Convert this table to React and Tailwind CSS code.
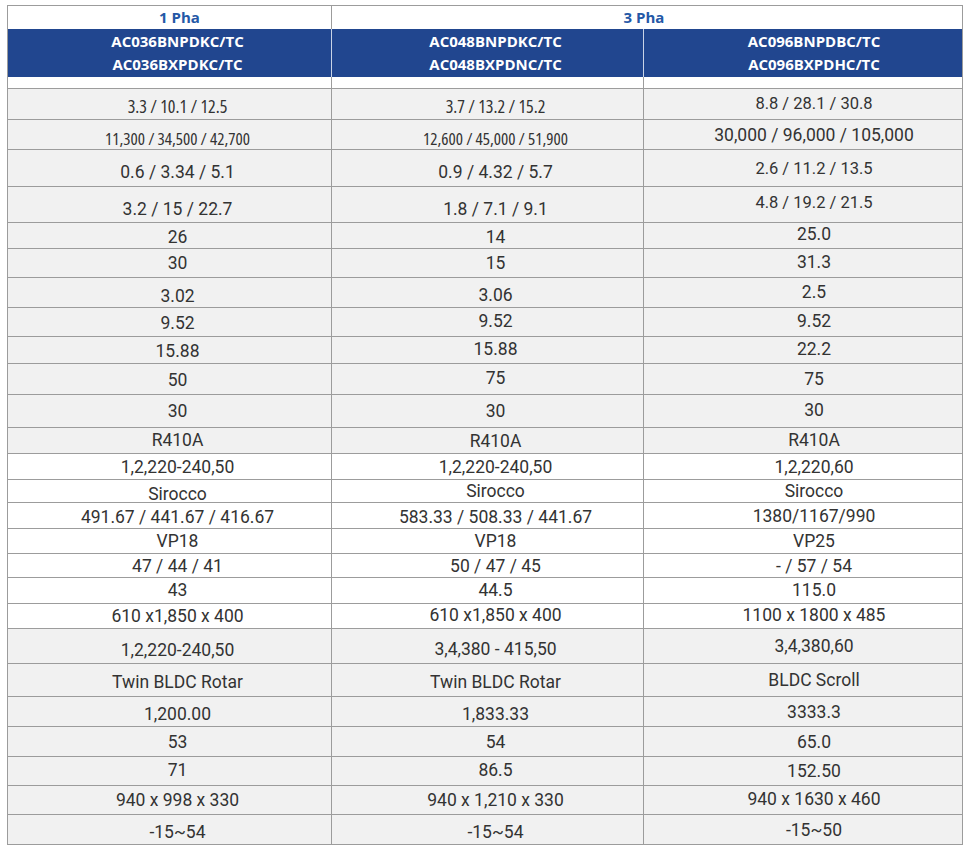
// Spec comparison table: 1 Pha / 3 Pha outdoor units
const GRAY = "bg-[#f1f1f1]";
const WHITE = "bg-white";

// the source table mixes a condensed face in the top rows with a regular one below
const C18 = "font-['Open_Sans',sans-serif] [font-stretch:75%] text-[18px]";
const C17 = "font-['Open_Sans',sans-serif] [font-stretch:75%] text-[17px]";
const R16 = "font-['Roboto',sans-serif] text-[16.5px]";
const BASE = "font-['Roboto',sans-serif] text-[17.5px]";

const rows = [
  { h: "h-[31px]", bg: GRAY, c: ["3.3 / 10.1 / 12.5", "3.7 / 13.2 / 15.2", "8.8 / 28.1 / 30.8"], o: ["translate-y-[2px]", "translate-y-[2px]", ""], s: [C18, C18, R16] },
  { h: "h-[30px]", bg: GRAY, c: ["11,300 / 34,500 / 42,700", "12,600 / 45,000 / 51,900", "30,000 / 96,000 / 105,000"], o: ["translate-y-[4px]", "translate-y-[4px]", "translate-y-[1px]"], s: [C17, C17, BASE] },
  { h: "h-[37px]", bg: GRAY, c: ["0.6 / 3.34 / 5.1", "0.9 / 4.32 / 5.7", "2.6 / 11.2 / 13.5"], o: ["translate-y-[5px]", "translate-y-[5px]", "translate-y-[1px]"], s: [BASE, BASE, R16] },
  { h: "h-[36px]", bg: GRAY, c: ["3.2 / 15 / 22.7", "1.8 / 7.1 / 9.1", "4.8 / 19.2 / 21.5"], o: ["translate-y-[5px]", "translate-y-[5px]", "-translate-y-[1px]"], s: [BASE, BASE, R16] },
  { h: "h-[26px]", bg: GRAY, c: ["26", "14", "25.0"], o: ["translate-y-[2px]", "translate-y-[2px]", "-translate-y-[1px]"] },
  { h: "h-[29px]", bg: GRAY, c: ["30", "15", "31.3"], o: ["translate-y-[1px]", "translate-y-[1px]", ""] },
  { h: "h-[30px]", bg: GRAY, c: ["3.02", "3.06", "2.5"], o: ["translate-y-[4px]", "translate-y-[3px]", ""] },
  { h: "h-[29px]", bg: GRAY, c: ["9.52", "9.52", "9.52"], o: ["translate-y-[2px]", "", ""] },
  { h: "h-[27px]", bg: GRAY, c: ["15.88", "15.88", "22.2"], o: ["translate-y-[2px]", "", ""] },
  { h: "h-[31px]", bg: GRAY, c: ["50", "75", "75"], o: ["translate-y-[2px]", "", "translate-y-[1px]"] },
  { h: "h-[33px]", bg: GRAY, c: ["30", "30", "30"], o: ["translate-y-[1px]", "translate-y-[1px]", ""] },
  { h: "h-[26px]", bg: GRAY, c: ["R410A", "R410A", "R410A"], o: ["", "translate-y-[1px]", ""] },
  { h: "h-[26px]", bg: WHITE, c: ["1,2,220-240,50", "1,2,220-240,50", "1,2,220,60"], o: ["translate-y-[1px]", "translate-y-[1px]", "translate-y-[1px]"] },
  { h: "h-[23px]", bg: WHITE, c: ["Sirocco", "Sirocco", "Sirocco"], o: ["translate-y-[4px]", "translate-y-[1px]", "translate-y-[1px]"] },
  { h: "h-[26px]", bg: WHITE, c: ["491.67 / 441.67 / 416.67", "583.33 / 508.33 / 441.67", "1380/1167/990"], o: ["translate-y-[2px]", "translate-y-[2px]", "translate-y-[1px]"] },
  { h: "h-[25px]", bg: WHITE, c: ["VP18", "VP18", "VP25"], o: ["translate-y-[1px]", "translate-y-[1px]", "translate-y-[1px]"] },
  { h: "h-[24px]", bg: WHITE, c: ["47 / 44 / 41", "50 / 47 / 45", "- / 57 / 54"], o: ["translate-y-[1px]", "translate-y-[1px]", "translate-y-[1px]"] },
  { h: "h-[26px]", bg: WHITE, c: ["43", "44.5", "115.0"], o: ["", "", ""] },
  { h: "h-[25px]", bg: WHITE, c: ["610 x1,850 x 400", "610 x1,850 x 400", "1100 x 1800 x 485"], o: ["translate-y-[1px]", "", ""] },
  { h: "h-[35px]", bg: GRAY, c: ["1,2,220-240,50", "3,4,380 - 415,50", "3,4,380,60"], o: ["translate-y-[5px]", "translate-y-[4px]", "translate-y-[1px]"] },
  { h: "h-[33px]", bg: GRAY, c: ["Twin BLDC Rotar", "Twin BLDC Rotar", "BLDC Scroll"], o: ["translate-y-[3px]", "translate-y-[3px]", "translate-y-[1px]"] },
  { h: "h-[30px]", bg: GRAY, c: ["1,200.00", "1,833.33", "3333.3"], o: ["translate-y-[3px]", "translate-y-[3px]", "translate-y-[1px]"] },
  { h: "h-[30px]", bg: GRAY, c: ["53", "54", "65.0"], o: ["translate-y-[1px]", "translate-y-[1px]", "translate-y-[1px]"] },
  { h: "h-[29px]", bg: GRAY, c: ["71", "86.5", "152.50"], o: ["", "", "translate-y-[1px]"] },
  { h: "h-[29px]", bg: GRAY, c: ["940 x 998 x 330", "940 x 1,210 x 330", "940 x 1630 x 460"], o: ["translate-y-[1px]", "translate-y-[1px]", ""] },
  { h: "h-[30px]", bg: GRAY, c: ["-15~54", "-15~54", "-15~50"], o: ["translate-y-[3px]", "translate-y-[3px]", "translate-y-[1px]"] },
];

const models = [
  ["AC036BNPDKC/TC", "AC036BXPDKC/TC"],
  ["AC048BNPDKC/TC", "AC048BXPDNC/TC"],
  ["AC096BNPDBC/TC", "AC096BXPDHC/TC"],
];

const colPad = ["pl-[16px]", "pl-[16px]", "pl-[22px]"];
const colBorder = ["border-r border-[#9c9c9c]", "border-r border-[#9c9c9c]", ""];

function BodyRow({ row }) {
  return (
    <div className={`grid grid-cols-[324px_312px_1fr] border-b border-[#9c9c9c] ${row.h} ${row.bg}`}>
      {row.c.map((text, i) => (
        <div
          key={i}
          className={`flex items-center justify-center ${colPad[i]} ${colBorder[i]}`}
        >
          <span className={`whitespace-nowrap leading-none ${row.s ? row.s[i] : BASE} ${row.o[i]}`}>
            {text}
          </span>
        </div>
      ))}
    </div>
  );
}

export default function App() {
  return (
    <div className="min-h-screen bg-white pt-[5px] pl-[7px] font-['Open_Sans',sans-serif] text-[#333333]">
      <div className="w-[956px] border-x border-t border-[#9c9c9c]">
        {/* phase header */}
        <div className="grid grid-cols-[324px_1fr] h-[23px] bg-white text-[15px] font-bold text-[#2458a6]">
          <div className="flex items-center justify-center pl-[20px] border-r border-[#9c9c9c]">
            <span className="leading-none">1 Pha</span>
          </div>
          <div className="flex items-center justify-center pr-[6px]">
            <span className="leading-none">3 Pha</span>
          </div>
        </div>

        {/* model names */}
        <div className="grid grid-cols-[324px_312px_1fr] h-[48px] bg-[#21468f] text-white text-[15px] font-bold">
          {models.map((m, i) => (
            <div
              key={i}
              className={`flex flex-col items-center justify-center leading-[23px] ${colPad[i]} ${i < 2 ? "border-r border-[#c9d3e6]" : ""}`}
            >
              <span>{m[0]}</span>
              <span>{m[1]}</span>
            </div>
          ))}
        </div>

        {/* spacer row under the band */}
        <div className="grid grid-cols-[324px_312px_1fr] h-[12px] bg-white border-b border-[#9c9c9c]">
          <div className="border-r border-[#9c9c9c]" />
          <div className="border-r border-[#9c9c9c]" />
          <div />
        </div>

        {rows.map((row, i) => (
          <BodyRow key={i} row={row} />
        ))}
      </div>
    </div>
  );
}
